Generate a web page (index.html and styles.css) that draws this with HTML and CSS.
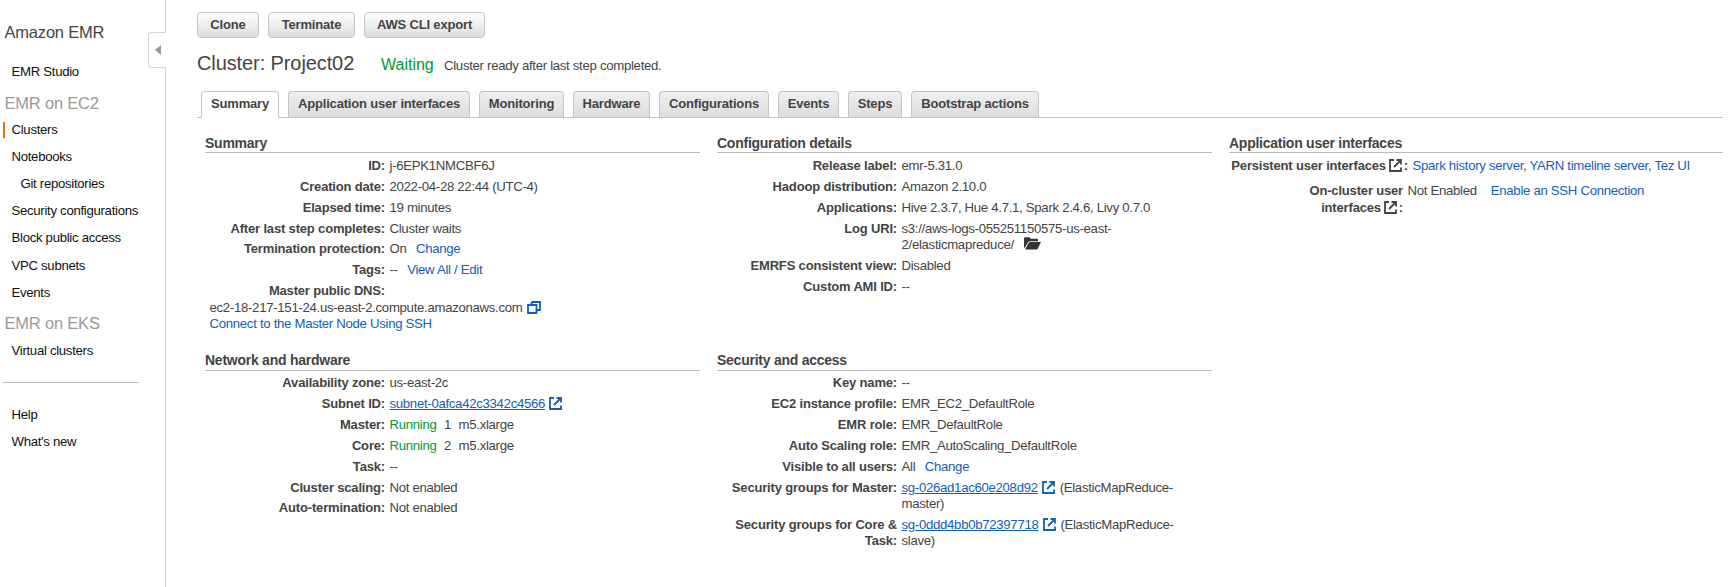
FILE: index.html
```html
<!DOCTYPE html>
<html lang="en">
<head>
<meta charset="utf-8">
<title>Amazon EMR</title>
<link rel="stylesheet" href="styles.css">
</head>
<body>
<svg class="defs" width="0" height="0" aria-hidden="true">
  <symbol id="ext" viewBox="0 0 13 13"><path d="M5 1H1v11h11V8.500" fill="none" stroke="currentColor" stroke-width="1.800"/><path d="M7.500 1H12v4.500M12 1 5 8" fill="none" stroke="currentColor" stroke-width="1.800"/></symbol>
  <symbol id="copy" viewBox="0 0 14 13"><path d="M4.500 1H13v8H10M1 4h8.500v8H1zM4.500 4V1" fill="none" stroke="currentColor" stroke-width="1.800"/></symbol>
  <symbol id="folder" viewBox="0 0 17 13"><path d="M0 10.500V1.200Q0 .3 1 .3h4.500l1.300 1.400H13q1 0 1 1V4.200H6Q5 4.200 4.300 5L.6 11z" fill="currentColor"/><path d="M1 12.500 4.800 5.800q.4-.8 1.300-.8H17l-3.300 6.700q-.4.800-1.300.8z" fill="currentColor"/></symbol>
</svg>
<div class="page">
  <aside class="sidebar">
    <h1 class="brand">Amazon EMR</h1>
    <a class="nav studio">EMR Studio</a>
    <h2 class="group">EMR on EC2</h2>
    <a class="nav active">Clusters</a>
    <a class="nav">Notebooks</a>
    <a class="nav sub">Git repositories</a>
    <a class="nav">Security configurations</a>
    <a class="nav">Block public access</a>
    <a class="nav">VPC subnets</a>
    <a class="nav">Events</a>
    <h2 class="group eks">EMR on EKS</h2>
    <a class="nav">Virtual clusters</a>
    <hr class="divider">
    <a class="nav">Help</a>
    <a class="nav">What's new</a>
    <div class="collapse"><span class="arrow"></span></div>
  </aside>
  <main class="main">
    <div class="actions">
      <button class="btn clone">Clone</button>
      <button class="btn terminate">Terminate</button>
      <button class="btn export">AWS CLI export</button>
    </div>
    <div class="title">
      <span class="name">Cluster: Project02</span>
      <span class="state">Waiting</span>
      <span class="message">Cluster ready after last step completed.</span>
    </div>
    <nav class="tabs">
      <a class="tab selected">Summary</a>
      <a class="tab t-app">Application user interfaces</a>
      <a class="tab t-mon">Monitoring</a>
      <a class="tab t-hard">Hardware</a>
      <a class="tab t-conf">Configurations</a>
      <a class="tab t-events">Events</a>
      <a class="tab t-steps">Steps</a>
      <a class="tab t-boot">Bootstrap actions</a>
    </nav>
    <div class="panels">
      <section class="panel">
        <h3 class="head">Summary</h3>
        <div class="row"><b class="label">ID:</b><span class="value">j-6EPK1NMCBF6J</span></div>
        <div class="row"><b class="label">Creation date:</b><span class="value">2022-04-28 22:44 (UTC-4)</span></div>
        <div class="row"><b class="label">Elapsed time:</b><span class="value">19 minutes</span></div>
        <div class="row"><b class="label">After last step completes:</b><span class="value">Cluster waits</span></div>
        <div class="row"><b class="label">Termination protection:</b><span class="value">On<a class="link after">Change</a></span></div>
        <div class="row"><b class="label">Tags:</b><span class="value">--<a class="link after">View All / Edit</a></span></div>
        <div class="row"><b class="label">Master public DNS:</b></div>
        <div class="dns">ec2-18-217-151-24.us-east-2.compute.amazonaws.com<svg class="icon copy"><use href="#copy"/></svg><br><a class="link">Connect to the Master Node Using SSH</a></div>
      </section>
      <section class="panel">
        <h3 class="head">Configuration details</h3>
        <div class="row"><b class="label">Release label:</b><span class="value">emr-5.31.0</span></div>
        <div class="row"><b class="label">Hadoop distribution:</b><span class="value">Amazon 2.10.0</span></div>
        <div class="row"><b class="label">Applications:</b><span class="value">Hive 2.3.7, Hue 4.7.1, Spark 2.4.6, Livy 0.7.0</span></div>
        <div class="row"><b class="label">Log URI:</b><span class="value">s3://aws-logs-055251150575-us-east-<br>2/elasticmapreduce/<svg class="icon folder"><use href="#folder"/></svg></span></div>
        <div class="row"><b class="label">EMRFS consistent view:</b><span class="value">Disabled</span></div>
        <div class="row"><b class="label">Custom AMI ID:</b><span class="value">--</span></div>
      </section>
      <section class="panel">
        <h3 class="head">Application user interfaces</h3>
        <div class="row persistent"><b class="label">Persistent user interfaces <svg class="icon ext"><use href="#ext"/></svg>:</b><span class="value"><a class="link">Spark history server</a>, <a class="link">YARN timeline server</a>, <a class="link">Tez UI</a></span></div>
        <div class="row oncluster"><b class="label">On-cluster user<br>interfaces <svg class="icon ext"><use href="#ext"/></svg>:</b><span class="value">Not Enabled<a class="link ssh">Enable an SSH Connection</a></span></div>
      </section>
      <section class="panel lower">
        <h3 class="head">Network and hardware</h3>
        <div class="row"><b class="label">Availability zone:</b><span class="value">us-east-2c</span></div>
        <div class="row"><b class="label">Subnet ID:</b><span class="value"><a class="link under">subnet-0afca42c3342c4566</a><svg class="icon ext blue"><use href="#ext"/></svg></span></div>
        <div class="row"><b class="label">Master:</b><span class="value counts"><span class="ok">Running</span><span>1</span><span>m5.xlarge</span></span></div>
        <div class="row"><b class="label">Core:</b><span class="value counts"><span class="ok">Running</span><span>2</span><span>m5.xlarge</span></span></div>
        <div class="row"><b class="label">Task:</b><span class="value">--</span></div>
        <div class="row"><b class="label">Cluster scaling:</b><span class="value">Not enabled</span></div>
        <div class="row"><b class="label">Auto-termination:</b><span class="value">Not enabled</span></div>
      </section>
      <section class="panel lower">
        <h3 class="head">Security and access</h3>
        <div class="row"><b class="label">Key name:</b><span class="value">--</span></div>
        <div class="row"><b class="label">EC2 instance profile:</b><span class="value">EMR_EC2_DefaultRole</span></div>
        <div class="row"><b class="label">EMR role:</b><span class="value">EMR_DefaultRole</span></div>
        <div class="row"><b class="label">Auto Scaling role:</b><span class="value">EMR_AutoScaling_DefaultRole</span></div>
        <div class="row"><b class="label">Visible to all users:</b><span class="value">All<a class="link after">Change</a></span></div>
        <div class="row"><b class="label">Security groups for Master:</b><span class="value"><a class="link under">sg-026ad1ac60e208d92</a><svg class="icon ext blue"><use href="#ext"/></svg> (ElasticMapReduce-<br>master)</span></div>
        <div class="row"><b class="label">Security groups for Core &amp;<br>Task:</b><span class="value"><a class="link under">sg-0ddd4bb0b72397718</a><svg class="icon ext blue"><use href="#ext"/></svg> (ElasticMapReduce-<br>slave)</span></div>
      </section>
    </div>
  </main>
</div>
</body>
</html>
```

FILE: styles.css
```css
* { box-sizing: border-box; }
body {
  margin: 0;
  background: #fff;
  color: #444;
  font: 13.2px/16.5px "Liberation Sans", Arial, sans-serif;
  letter-spacing: -0.3px;
  overflow: hidden;
}
.defs { position: absolute; }
.page { display: flex; height: 587px; }

/* sidebar */
.sidebar {
  position: relative;
  flex: 0 0 166px;
  border-right: 1px solid #d5d5d5;
}
.brand, .group {
  margin: 0;
  font-size: 16.5px;
  font-weight: 400;
  letter-spacing: -0.2px;
  padding-left: 4.500px;
}
.brand { height: 58px; padding-top: 19px; line-height: 27px; }
.group { height: 31px; padding-top: 5px; line-height: 27px; color: #999; }
.group.eks { padding-top: 4px; }
.nav {
  display: block;
  height: 27.1px;
  line-height: 27px;
  padding-left: 11.500px;
  color: #111;
}
.nav.sub { padding-left: 20.500px; }
.nav.active {
  background: linear-gradient(#e07700, #e07700) 3px 6px / 2px 16px no-repeat;
}
.divider { margin: 18px 26px 18px 3px; border: 0; border-top: 1px solid #bbb; }
.collapse {
  position: absolute;
  left: 148px;
  top: 32px;
  width: 18px;
  height: 36px;
  border: 1px solid #d5d5d5;
  border-right: 0;
  border-radius: 4px 0 0 4px;
  background: #fff;
  display: flex;
  align-items: center;
  padding-left: 6px;
}
.arrow { border: 5px solid transparent; border-left: 0; border-right: 6px solid #999; }

/* header */
.main { flex: 1; padding: 12px 6px 0 31px; }
.actions { display: flex; gap: 9px; }
.btn {
  height: 26px;
  padding: 0;
  border: 1px solid #c4c4c4;
  border-radius: 4px;
  background: linear-gradient(#fff, #ddd);
  color: #444;
  font: bold 13px/22px "Liberation Sans", Arial, sans-serif;
  letter-spacing: -0.17px;
}
.clone { width: 62px; }
.terminate { width: 87px; }
.export { width: 121px; }
.title { display: flex; align-items: baseline; height: 53px; padding-top: 13px; line-height: 24px; }
.name { font-size: 20px; width: 184px; letter-spacing: -0.1px; }
.state { font-size: 16px; width: 63px; color: #093; letter-spacing: 0; }
.tabs { display: flex; gap: 9px; padding-left: 4px; height: 27px; border-bottom: 1px solid #c4c4c4; }
.tab {
  height: 26px;
  border: 1px solid #c4c4c4;
  border-bottom: 0;
  border-radius: 4px 4px 0 0;
  background: linear-gradient(#efefef, #ddd);
  font-size: 13px;
  font-weight: bold;
  line-height: 24px;
  text-align: center;
  letter-spacing: -0.18px;
}
.selected { width: 78px; height: 27px; background: #fff; }
.t-app { width: 182px; }
.t-mon { width: 85px; }
.t-hard { width: 77px; }
.t-conf { width: 110px; }
.t-events { width: 61px; }
.t-steps { width: 54px; }
.t-boot { width: 128px; }

/* detail panels */
.panels {
  display: grid;
  grid-template-columns: 495px 495px 494px;
  grid-template-rows: 218px auto;
  column-gap: 17px;
  padding: 15px 0 0 8px;
}
.head {
  height: 20px;
  margin: 0 0 2.700px;
  border-bottom: 1px solid #bbb;
  font-size: 14px;
  line-height: 20px;
  letter-spacing: -0.25px;
}
.lower .head { margin-bottom: 2px; line-height: 18px; }
.row { display: flex; padding: 2.2px 0; }
.label { flex: 0 0 180px; text-align: right; font-size: 13px; letter-spacing: -0.17px; }
.value { padding-left: 4.500px; white-space: nowrap; }
.link { color: #1360b8; }
.after { margin-left: 9.500px; }
.under { text-decoration: underline; }
.ok { color: #093; }
.counts { display: flex; gap: 7.500px; }
.dns { margin-top: -1.700px; padding-left: 4.500px; line-height: 16px; }
.persistent .label { flex-basis: 179px; }
.oncluster { padding-top: 6.500px; }
.oncluster .label { flex-basis: 174px; }
.ssh { margin-left: 14px; }
.icon { display: inline-block; vertical-align: -2px; }
.ext { width: 13px; height: 13px; margin-right: 1.500px; }
.blue { margin-left: 4px; color: #1360b8; }
.copy { width: 14px; height: 13px; margin-left: 5px; color: #1360b8; }
.folder { width: 17px; height: 13px; margin-left: 10px; color: #333; vertical-align: -1px; }
```
